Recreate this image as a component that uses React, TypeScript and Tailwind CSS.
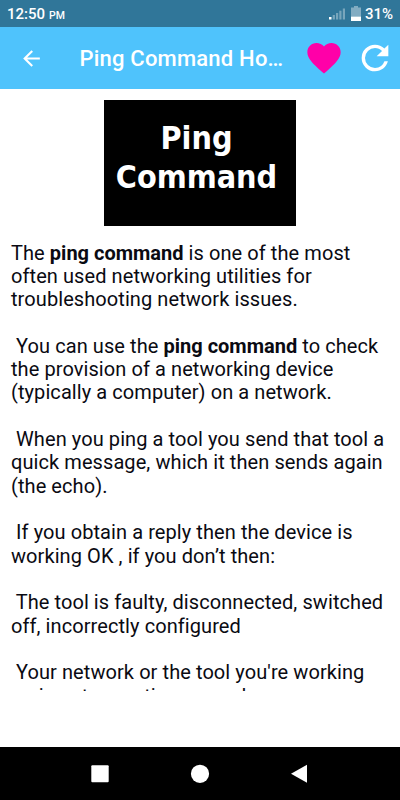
const lines = [
  "The **ping command** is one of the most",
  "often used networking utilities for",
  "troubleshooting network issues.",
  "",
  " You can use the **ping command** to check",
  "the provision of a networking device",
  "(typically a computer) on a network.",
  "",
  " When you ping a tool you send that tool a",
  "quick message, which it then sends again",
  "(the echo).",
  "",
  " If you obtain a reply then the device is",
  "working OK , if you don’t then:",
  "",
  " The tool is faulty, disconnected, switched",
  "off, incorrectly configured",
  "",
  " Your network or the tool you're working",
  "on is not operating properly.",
];

function StatusBar() {
  return (
    <div className="flex h-[27px] items-center bg-[#307699] px-[7px] pt-[2px] text-[15px] font-medium text-white">
      <span>12:50</span>
      <span className="ml-[4px] mt-[3px] text-[10.5px]">PM</span>
      <svg className="mb-[2px] ml-auto" width="17" height="12" viewBox="0 0 17 12" fill="white">
        <rect y="9" width="2.5" height="2.5" />
        <g opacity=".35">
          <rect x="3.7" y="7" width="2.2" height="4.5" />
          <rect x="7" y="5" width="2.2" height="6.5" />
          <rect x="10.3" y="2.7" width="2.2" height="8.8" />
          <rect x="13.8" y="0.5" width="2.2" height="11" />
        </g>
      </svg>
      <svg className="mb-[2px] ml-[5px]" width="10" height="15" viewBox="0 0 10 15" fill="white">
        <path d="M3 0h4v1.5h3v9H0v-9h3z" opacity=".4" />
        <path d="M0 10.5h10V15H0z" />
      </svg>
      <span className="ml-[4px]">31%</span>
    </div>
  );
}

function AppBar() {
  return (
    <header className="flex h-[62px] items-center bg-[#4fc3fc] pl-[18.5px] text-white">
      <svg className="shrink-0" width="25" height="25" viewBox="0 0 24 24" fill="currentColor">
        <path d="M20 11H7.83l5.59-5.59L12 4l-8 8 8 8 1.41-1.41L7.83 13H20v-2z" />
      </svg>
      <h1 className="ml-[36px] w-[208px] shrink-0 whitespace-nowrap pt-px text-[22px] font-medium tracking-[0.2px]">
        Ping Command Ho…
      </h1>
      <svg className="ml-[16px] shrink-0" width="40" height="40" viewBox="0 0 24 24" fill="#ff00a8">
        <path d="M12 21.35l-1.45-1.32C5.4 15.36 2 12.28 2 8.5 2 5.42 4.42 3 7.5 3c1.74 0 3.41.81 4.5 2.09C13.09 3.81 14.76 3 16.5 3 19.58 3 22 5.42 22 8.5c0 3.78-3.4 6.86-8.55 11.54L12 21.35z" />
      </svg>
      <svg className="ml-[11px] shrink-0" width="40" height="40" viewBox="0 0 24 24" fill="currentColor">
        <path d="M17.65 6.35A7.958 7.958 0 0012 4a8 8 0 100 16c3.73 0 6.84-2.55 7.73-6h-2.08A5.99 5.99 0 0112 18a6 6 0 110-12c1.66 0 3.14.69 4.22 1.78L13 11h7V4l-2.35 2.35z" />
      </svg>
    </header>
  );
}

export default function App() {
  const renderLines = lines.map((line, index) => (
    <div className="h-[23.33px]" key={index}>
      {line.split("**").map((part, i) =>
        i % 2 ? (
          <b className="tracking-normal" key={i}>
            {part}
          </b>
        ) : (
          part
        )
      )}
    </div>
  ));

  return (
    <div className="flex h-[800px] w-[400px] flex-col overflow-hidden bg-white font-['Roboto',sans-serif]">
      <StatusBar />
      <AppBar />
      <div className="mx-auto mt-[11px] h-[126px] w-[192px] bg-black pr-[7px] pt-[19px] text-center font-['DejaVu_Sans_Condensed','DejaVu_Sans',sans-serif] text-[32px] font-bold leading-[39px] text-white [font-stretch:condensed]">
        Ping
        <br />
        Command
      </div>
      <main className="mt-[15.5px] h-[449px] overflow-hidden whitespace-pre pl-[11px] text-[20px] leading-[23.33px] tracking-[0.08px] text-[#0a0a12]">
        {renderLines}
      </main>
      <nav className="mt-auto flex h-[53px] items-center justify-center bg-black">
        <svg width="220" height="20" viewBox="0 0 220 20" fill="white">
          <rect x="1.3" y="1.3" width="17.4" height="17" rx="1" />
          <circle cx="110" cy="9.8" r="9.1" />
          <path d="M201 9.8l16-9v18z" />
        </svg>
      </nav>
    </div>
  );
}
